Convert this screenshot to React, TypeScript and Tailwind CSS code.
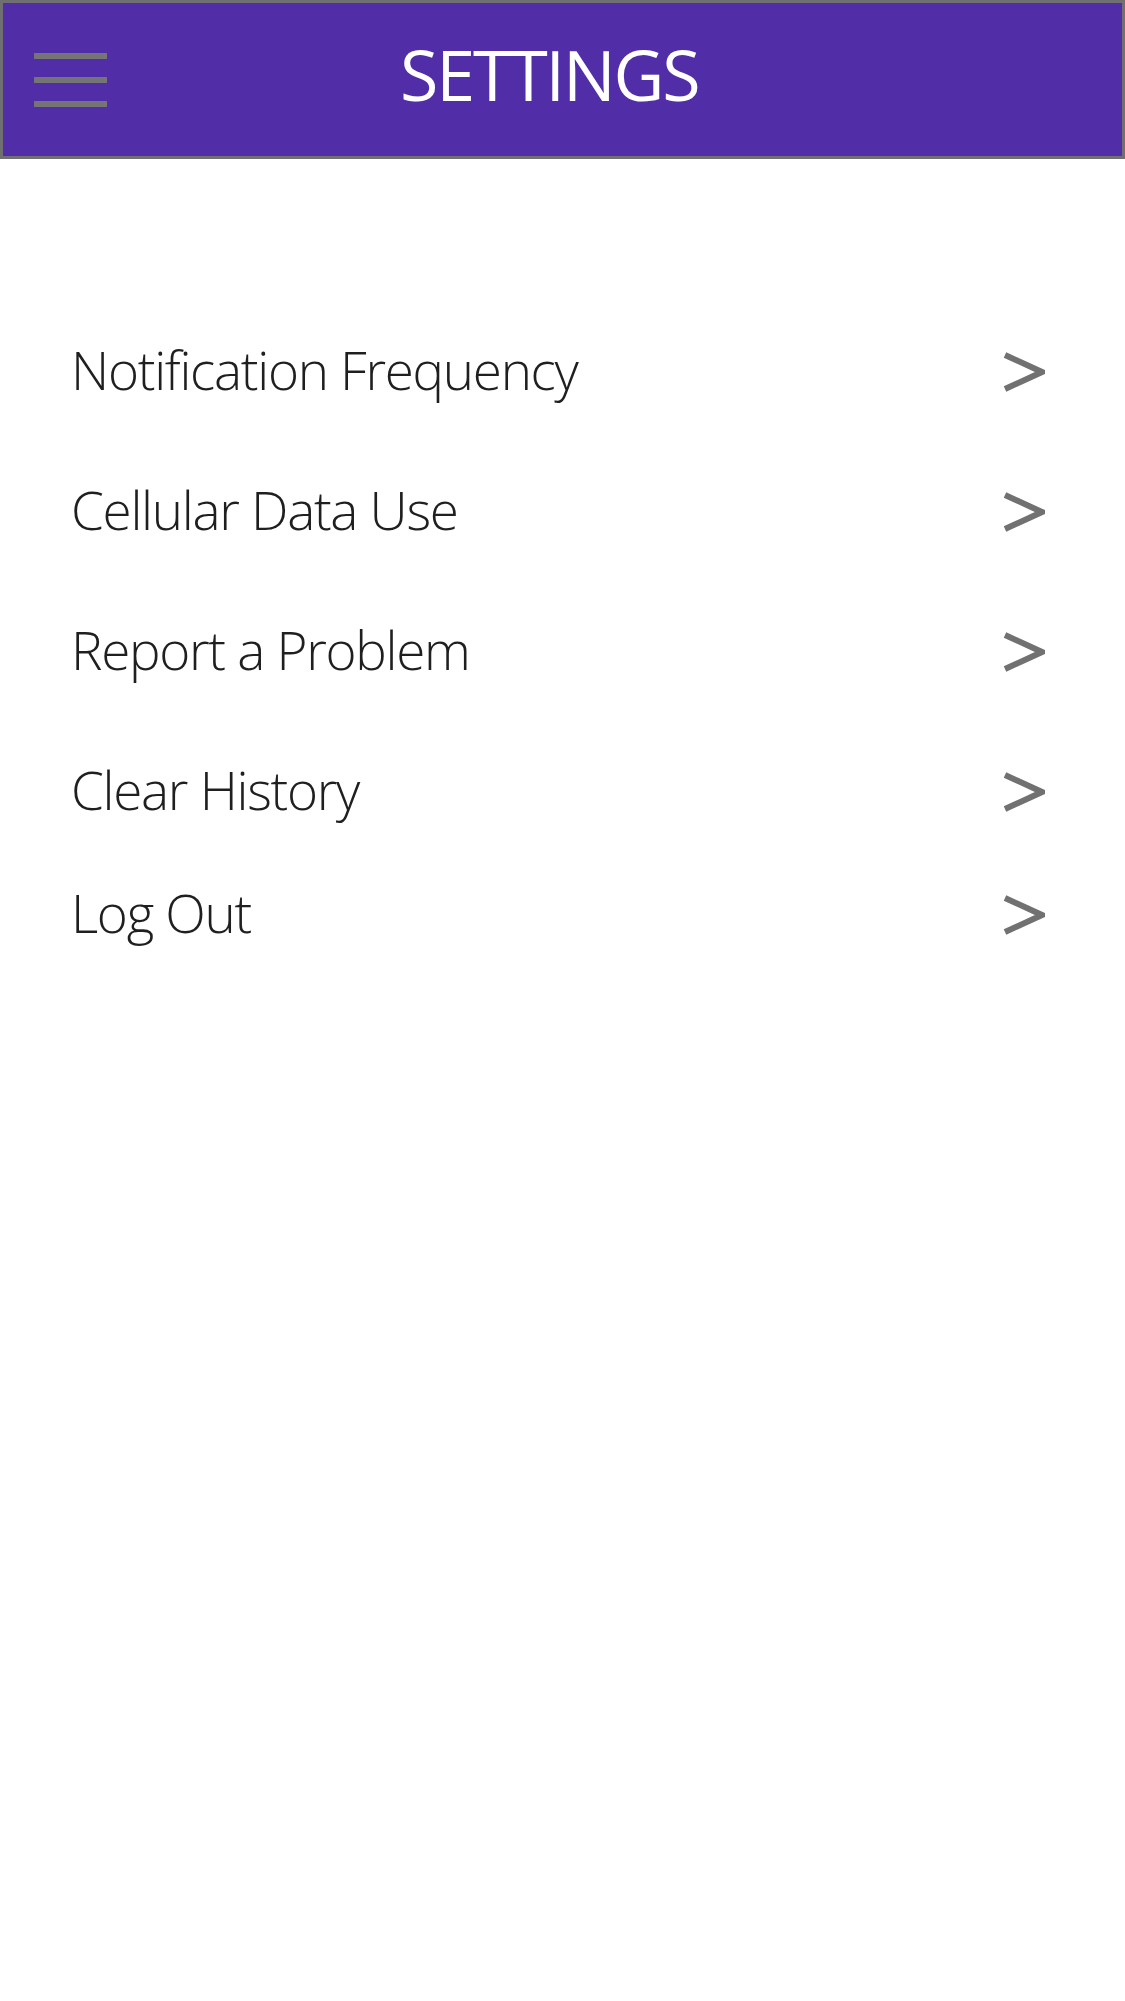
const items = [
  { label: 'Notification Frequency', h: 'h-[140px]' },
  { label: 'Cellular Data Use', h: 'h-[140px]' },
  { label: 'Report a Problem', h: 'h-[140px]' },
  { label: 'Clear History', h: 'h-[140px]' },
  { label: 'Log Out', h: 'h-[106px]' },
];

function Chevron() {
  return (
    <svg width="42" height="40" viewBox="0 0 42 40" className="mt-[6px] shrink-0">
      <polyline
        points="2,3 39,20 2,37"
        fill="none"
        stroke="#717171"
        strokeWidth="6"
        strokeLinejoin="miter"
      />
    </svg>
  );
}

export default function App() {
  return (
    <div className="min-h-[2001px] w-full bg-white font-['Open_Sans',sans-serif]">
      <header className="flex h-[159px] items-center border-[3px] border-[#707070] bg-[#512DA8]">
        <div className="ml-[31px] flex w-[73px] flex-col gap-[18px]">
          <span className="block h-[6px] bg-[#757575]" />
          <span className="block h-[6px] bg-[#757575]" />
          <span className="block h-[6px] bg-[#757575]" />
        </div>
        <h1 className="mb-[12px] ml-[293px] text-[70px] leading-none tracking-[-2.2px] text-white">SETTINGS</h1>
      </header>

      <ul className="pt-[140px] pl-[71px] pr-[80px]">
        {items.map((item) => (
          <li key={item.label} className={`flex items-center justify-between ${item.h}`}>
            <span className="text-[53px] font-light leading-none tracking-[-1.3px] text-[#1f1f1f]">{item.label}</span>
            <Chevron />
          </li>
        ))}
      </ul>
    </div>
  );
}
